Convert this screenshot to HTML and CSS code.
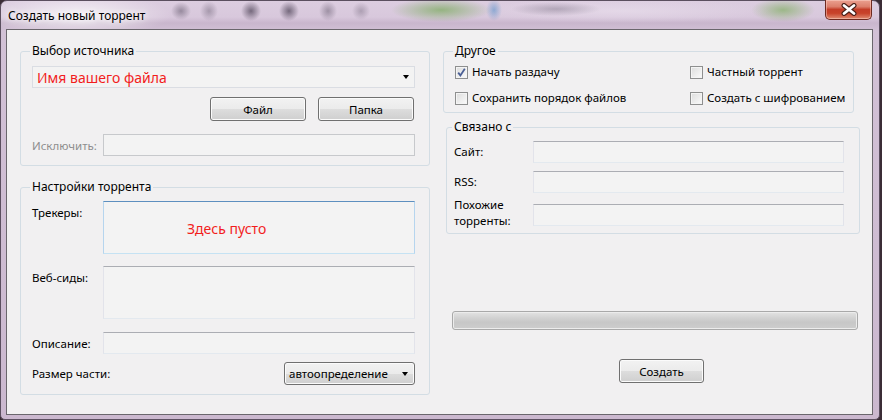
FILE: index.html
```html
<!DOCTYPE html>
<html lang="ru">
<head>
    <meta charset="UTF-8">
    <meta name="viewport" content="width=device-width, initial-scale=1.0">
    <title>Создать новый торрент</title>
    <link rel="stylesheet" href="styles.css">
</head>
<body>
    <div class="window">
        <!-- Title bar -->
        <div class="titlebar">
            <span class="title">Создать новый торрент</span>
            <button class="close-btn" title="Закрыть">
                <svg width="18" height="13" viewBox="0 0 18 13">
                    <path d="M4 2.5 L14 10.5 M14 2.5 L4 10.5" stroke="#4a2019" stroke-width="5" stroke-linecap="round"/>
                    <path d="M4 2.5 L14 10.5 M14 2.5 L4 10.5" stroke="#fff" stroke-width="2.8" stroke-linecap="round"/>
                </svg>
            </button>
        </div>

        <div class="client">
            <!-- Left column -->
            <div class="col-left">
                <fieldset class="group group-source">
                    <legend>Выбор источника</legend>
                    <div class="combo">
                        <span class="combo-text">Имя вашего файла</span>
                        <span class="arrow"></span>
                    </div>
                    <div class="source-buttons">
                        <button class="btn">Файл</button>
                        <button class="btn">Папка</button>
                    </div>
                    <div class="exclude-row">
                        <label class="muted">Исключить:</label>
                        <div class="edit disabled"></div>
                    </div>
                </fieldset>

                <fieldset class="group group-settings">
                    <legend>Настройки торрента</legend>
                    <div class="form-grid">
                        <label>Трекеры:</label>
                        <div class="edit memo focused"><span class="hint">Здесь пусто</span></div>

                        <label>Веб-сиды:</label>
                        <div class="edit memo"></div>

                        <label class="desc">Описание:</label>
                        <div class="edit desc"></div>

                        <div class="piece-row">
                            <label>Размер части:</label>
                            <div class="dropdown">автоопределение<span class="arrow"></span></div>
                        </div>
                    </div>
                </fieldset>
            </div>

            <!-- Right column -->
            <div class="col-right">
                <fieldset class="group group-other">
                    <legend>Другое</legend>
                    <div class="check-grid">
                        <div class="check">
                            <span class="box checked">
                                <svg width="11" height="11" viewBox="0 0 11 11"><path d="M2.2 5.6 L4.4 8.4 L8.8 1.8" fill="none" stroke="#4b5f95" stroke-width="1.8"/></svg>
                            </span>
                            Начать раздачу
                        </div>
                        <div class="check"><span class="box"></span>Частный торрент</div>
                        <div class="check"><span class="box"></span>Сохранить порядок файлов</div>
                        <div class="check"><span class="box"></span>Создать с шифрованием</div>
                    </div>
                </fieldset>

                <fieldset class="group group-links">
                    <legend>Связано с</legend>
                    <div class="links-grid">
                        <label>Сайт:</label>
                        <div class="edit"></div>
                        <label>RSS:</label>
                        <div class="edit"></div>
                        <label class="two-line">Похожие торренты:</label>
                        <div class="edit similar"></div>
                    </div>
                </fieldset>

                <div class="progress"></div>

                <button class="btn create-btn">Создать</button>
            </div>
        </div>
    </div>
</body>
</html>
```

FILE: styles.css
```css
* {
    box-sizing: border-box;
}
body {
    margin: 0;
    background-color: #3b2d36;
    font-family: "Noto Sans", "DejaVu Sans", sans-serif;
    font-size: 11.5px;
    color: #000;
}
.window {
    width: 880px;
    height: 420px;
    display: flex;
    flex-direction: column;
    padding: 0 6px 4px 5px;
    border: 1px solid #5b4f5f;
    border-radius: 7px 7px 5px 5px;
    background-color: #cfbdd3;
    background-image:
        radial-gradient(ellipse 95px 22px at 75px 14px, rgba(255, 255, 255, 0.75), rgba(255, 255, 255, 0)),
        radial-gradient(ellipse 10px 9px at 180px 10px, rgba(70, 60, 80, 0.45), rgba(70, 60, 80, 0)),
        radial-gradient(ellipse 9px 10px at 208px 10px, rgba(70, 60, 80, 0.35), rgba(70, 60, 80, 0)),
        radial-gradient(ellipse 10px 10px at 250px 10px, rgba(50, 40, 60, 0.6), rgba(50, 40, 60, 0)),
        radial-gradient(ellipse 10px 10px at 288px 10px, rgba(50, 40, 60, 0.6), rgba(50, 40, 60, 0)),
        radial-gradient(ellipse 9px 10px at 327px 10px, rgba(70, 60, 80, 0.4), rgba(70, 60, 80, 0)),
        radial-gradient(ellipse 9px 9px at 360px 10px, rgba(70, 60, 80, 0.3), rgba(70, 60, 80, 0)),
        radial-gradient(ellipse 50px 12px at 440px 9px, rgba(120, 170, 90, 0.7), rgba(120, 170, 90, 0)),
        radial-gradient(ellipse 8px 11px at 493px 9px, rgba(80, 140, 200, 0.55), rgba(80, 140, 200, 0)),
        radial-gradient(ellipse 45px 7px at 555px 8px, rgba(110, 100, 120, 0.4), rgba(110, 100, 120, 0)),
        radial-gradient(ellipse 150px 12px at 620px 10px, rgba(235, 225, 238, 0.6), rgba(235, 225, 238, 0)),
        radial-gradient(ellipse 32px 12px at 782px 9px, rgba(130, 175, 100, 0.7), rgba(130, 175, 100, 0)),
        linear-gradient(#dccde0 0, #d8c8dc 16px, #c9b6cd 22px, #d2c1d6 30px, #cbb8cf 100%);
}

/* Title bar */
.titlebar {
    height: 28px;
    display: flex;
    align-items: flex-start;
}
.title {
    padding: 7px 0 0 2px;
    font-size: 12px;
    line-height: 16px;
    text-shadow: 0 0 6px #fff, 0 0 10px #fff;
}
.close-btn {
    margin: -1px 1px 0 auto;
    width: 47px;
    height: 20px;
    padding: 0;
    display: flex;
    align-items: center;
    justify-content: center;
    border: 1px solid #6e2a20;
    border-top: none;
    border-radius: 0 0 5px 5px;
    background: linear-gradient(#eba090 0, #dc7f6c 35%, #c43d28 50%, #c8432a 70%, #e08c72 100%);
    box-shadow: inset 0 0 0 1px rgba(255, 220, 210, 0.45);
}

/* Client area */
.client {
    flex: 1;
    display: flex;
    padding: 13px 0 0 13px;
    border: 1px solid #6a666c;
    background-color: #f1f0f1;
}
.col-left {
    width: 410px;
    display: flex;
    flex-direction: column;
}
.col-right {
    margin-left: 13px;
    display: flex;
    flex-direction: column;
    align-items: flex-start;
}

/* Group boxes */
.group {
    margin: 0;
    min-width: 0;
    border: 1px solid #d3dde4;
    border-radius: 3px;
}
.group legend {
    padding: 0 2px;
    margin-left: -2px;
    font-size: 12px;
    line-height: 16px;
}
.group-source {
    padding: 7px 14px 9px 11px;
}
.group-settings {
    margin-top: 13px;
    padding: 6px 14px 9px 11px;
}

/* Inputs */
.edit {
    height: 22px;
    border: 1px solid;
    border-color: #abadb3 #e2e3ea #e3e9ef #e2e3ea;
    background-color: #f3f3f3;
}
.edit.disabled {
    border-color: #c7c9cc;
}
.edit.memo {
    height: 53px;
}
.edit.focused {
    display: flex;
    align-items: center;
    padding: 2px 0 0 83px;
    border-color: #5d8fbf #b6d5ee #c5e2f3 #b6d5ee;
}
.hint {
    color: #f21d1d;
    font-size: 14px;
}
.combo {
    height: 22px;
    display: flex;
    align-items: center;
    justify-content: space-between;
    padding: 0 5px 0 4px;
    border: 1px solid #dadde3;
    background-color: #f3f3f3;
}
.combo-text {
    color: #f21d1d;
    font-size: 14px;
}
.arrow {
    width: 0;
    height: 0;
    border-left: 3.5px solid transparent;
    border-right: 3.5px solid transparent;
    border-top: 4px solid #000;
}

/* Buttons */
.btn {
    width: 96px;
    height: 24px;
    padding: 0;
    font: inherit;
    color: #000;
    border: 1px solid #707070;
    border-radius: 3px;
    background: linear-gradient(#f2f2f2 0%, #ebebeb 50%, #dddddd 51%, #cfcfcf 100%);
    box-shadow: inset 0 0 0 1px #fbfbfb;
}
.source-buttons {
    margin: 9px 1px 0 0;
    display: flex;
    justify-content: flex-end;
    gap: 12px;
}
.exclude-row {
    margin-top: 13px;
    display: grid;
    grid-template-columns: 71px 1fr;
    align-items: center;
}
.muted {
    color: #8e8e8e;
}

/* Torrent settings */
.form-grid {
    display: grid;
    grid-template-columns: 71px 1fr;
    row-gap: 12px;
}
.form-grid label {
    padding-top: 4px;
    line-height: 16px;
}
.form-grid .desc {
    margin-top: 1px;
}
.piece-row {
    grid-column: 1 / -1;
    margin-top: -4px;
    display: flex;
    justify-content: space-between;
}
.dropdown {
    width: 131px;
    height: 23px;
    display: flex;
    align-items: center;
    justify-content: space-between;
    padding: 0 6px 0 4px;
    border: 1px solid #707070;
    border-radius: 3px;
    background: linear-gradient(#f2f2f2 0%, #ebebeb 50%, #dddddd 51%, #cfcfcf 100%);
    box-shadow: inset 0 0 0 1px #fbfbfb;
}

/* Other options */
.group-other {
    width: 411px;
    padding: 5px 10px 6px 11px;
}
.check-grid {
    display: grid;
    grid-template-columns: 235px auto;
    row-gap: 10px;
}
.check {
    display: flex;
    align-items: center;
    gap: 4px;
    line-height: 16px;
    white-space: nowrap;
}
.box {
    width: 13px;
    height: 13px;
    flex: none;
    display: flex;
    align-items: center;
    justify-content: center;
    border: 1px solid #8e8f8f;
    background: linear-gradient(135deg, #dcdcdc, #fbfbfb);
    box-shadow: inset 0 0 0 1px #f4f4f4;
}

/* Related links */
.group-links {
    width: 414px;
    margin: 6px 0 0 3px;
    padding: 6px 15px 4px 7px;
}
.links-grid {
    display: grid;
    grid-template-columns: 79px 1fr;
    row-gap: 8px;
    align-items: center;
}
.links-grid label {
    line-height: 16px;
}
.links-grid .two-line {
    width: 60px;
    align-self: start;
    margin-top: -4px;
}
.links-grid .similar {
    align-self: start;
    margin-top: 3px;
}

/* Progress and create */
.progress {
    width: 406px;
    height: 19px;
    margin: 77px 0 0 9px;
    border: 1px solid #a9a9a9;
    border-radius: 3px;
    background: linear-gradient(#e3e3e3 0%, #d2d2d2 35%, #c7c7c7 60%, #cdcdcd 100%);
    box-shadow: inset 0 0 0 1px #ececec;
}
.create-btn {
    width: 85px;
    margin: 29px 0 0 176px;
}
```
